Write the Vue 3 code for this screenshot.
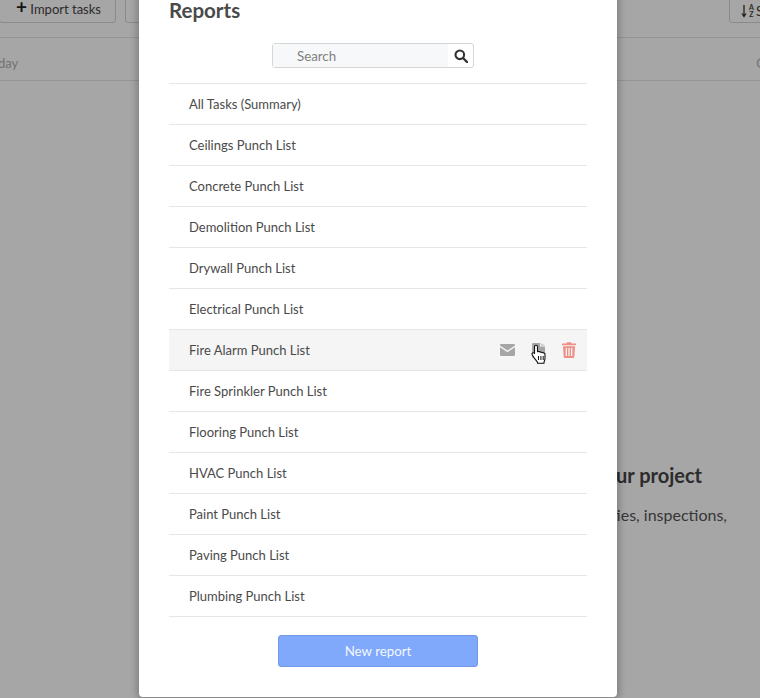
<script setup>
const reports = [
  'All Tasks (Summary)', 'Ceilings Punch List', 'Concrete Punch List', 'Demolition Punch List',
  'Drywall Punch List', 'Electrical Punch List', 'Fire Alarm Punch List', 'Fire Sprinkler Punch List',
  'Flooring Punch List', 'HVAC Punch List', 'Paint Punch List', 'Paving Punch List', 'Plumbing Punch List'
]
const activeRow = 'Fire Alarm Punch List'
</script>

<template>
  <div class="page">
    <header class="toolbar">
      <div class="toolbar-left">
        <button class="tool-btn import"><span class="plus">+</span> Import tasks</button>
        <button class="tool-btn stub"></button>
      </div>
      <button class="tool-btn sort">
        <svg class="sort-arrow" width="6" height="14" viewBox="0 0 6 14"><path d="M3 1v11M1 9.500l2 3 2-3" fill="none" stroke="#333" stroke-width="1.300"/></svg>
        <span class="sort-letters"><span>A</span><span>Z</span></span>
        <span>Sort</span>
      </button>
    </header>
    <div class="columns">
      <span>day</span>
      <span class="col-right">C</span>
    </div>
    <section class="empty">
      <h2>your project</h2>
      <p>activities, inspections,</p>
    </section>

    <div class="overlay">
      <div class="modal">
        <h1>Reports</h1>
        <div class="search">
          <span class="search-input">Search</span>
          <svg class="search-icon" width="14" height="14" viewBox="0 0 14 14">
            <circle cx="5.800" cy="5.800" r="4.300" fill="none" stroke="#333" stroke-width="2.100"/>
            <path d="M9 9l4 4" stroke="#333" stroke-width="2.400" stroke-linecap="round"/>
          </svg>
        </div>
        <ul class="list">
          <li v-for="r in reports" :key="r" class="row" :class="{ active: r === activeRow }">
            <span>{{ r }}</span>
            <span v-if="r === activeRow" class="actions">
              <svg width="15" height="12" viewBox="0 0 16 12" preserveAspectRatio="none">
                <path d="M1.200 0h13.600c.7 0 1.200.5 1.200 1.200v.4L8 6.500 0 1.600v-.4C0 .5.500 0 1.200 0z" fill="#a6a6a6"/>
                <path d="M0 3.300l8 4.900 8-4.900v7.500c0 .7-.5 1.200-1.200 1.200H1.200C.5 12 0 11.500 0 10.800z" fill="#a6a6a6"/>
              </svg>
              <span class="copy-wrap">
                <svg width="13" height="15" viewBox="0 0 12 15" preserveAspectRatio="none">
                  <path d="M1 0h6.500v3.500H12V14a1 1 0 0 1-1 1H1a1 1 0 0 1-1-1V1a1 1 0 0 1 1-1z" fill="#a6a6a6"/>
                  <path d="M8.500 0L12 2.800H8.500z" fill="#c4c4c4"/>
                </svg>
                <svg class="cursor" width="16" height="20" viewBox="0 0 16 20">
                  <path d="M5 1.300c.9 0 1.500.6 1.500 1.500v5l1.300-.3c.7-.1 1.200.2 1.400.7.600-.3 1.300-.2 1.700.4.600-.3 1.400-.1 1.700.5.600-.2 1.300.2 1.400 1v4.200c0 1.600-.5 2.600-1 3.800v1.100H6.500v-1c-1-1.100-2.200-2.800-3.400-4.400L1.300 11c-.6-.8-.4-1.600.2-2 .6-.4 1.300-.3 1.900.3l.1.100V2.800c0-.9.600-1.500 1.500-1.500z" fill="#fff" stroke="#111" stroke-width="1.100" stroke-linejoin="round"/>
                  <path d="M7.500 12v4M9.900 12v4M12.200 12v4" stroke="#111" stroke-width="1"/>
                </svg>
              </span>
              <svg width="14" height="16" viewBox="0 0 14 16">
                <path d="M5 .2h4l.7 1.300H14V3.200H0V1.500h4.300z" fill="#ee9085"/>
                <path d="M1 4.200h12l-.7 10.500c-.1.800-.5 1.300-1.200 1.300H2.900c-.7 0-1.100-.5-1.200-1.300zM3.700 6v8h1.300V6zm2.650 0v8h1.300V6zM9 6v8h1.300V6z" fill="#ee9085" fill-rule="evenodd"/>
              </svg>
            </span>
          </li>
        </ul>
        <button class="new-report">New report</button>
      </div>
    </div>
  </div>
</template>

<style>
html, body { margin: 0; background: #fff; }
</style>

<style scoped>
.page {
  position: relative;
  width: 760px;
  height: 698px;
  overflow: hidden;
  font-family: Lato, "Open Sans", sans-serif;
  color: #333;
  background: #fff;
}
.toolbar {
  display: flex;
  justify-content: space-between;
  height: 37px;
  border-bottom: 1px solid #e3e3e3;
}
.toolbar-left { display: flex; gap: 9px; }
.tool-btn {
  height: 30px;
  margin-top: -7px;
  padding: 0;
  border: 1px solid #d4d4d4;
  border-radius: 3px;
  background: #fff;
  font: 13px Lato, sans-serif;
  color: #444;
}
.import { width: 117px; margin-left: -1px; padding-left: 2px; }
.plus { font-size: 19px; font-weight: 700; line-height: 14px; color: #222; }
.stub { width: 60px; }
.sort {
  display: flex;
  align-items: center;
  gap: 2px;
  width: 70px;
  margin-right: -39px;
  padding: 6px 0 0 11px;
  white-space: nowrap;
}
.sort-letters {
  display: flex;
  flex-direction: column;
  font-size: 7px;
  font-weight: 700;
  line-height: 7px;
}
.columns {
  display: flex;
  justify-content: space-between;
  height: 42px;
  margin-left: -2px;
  margin-right: -5px;
  border-bottom: 1px solid #e3e3e3;
  line-height: 50px;
  font-size: 13px;
  color: #b0b0b0;
}
.empty {
  padding-top: 381px;
  padding-right: 33px;
  text-align: right;
}
.empty h2 {
  margin: 0;
  padding-right: 25px;
  font-size: 20px;
  line-height: 26px;
  font-weight: 700;
  color: #444;
}
.empty p {
  margin: 15px 0 0;
  font-size: 16px;
  line-height: 24px;
  color: #555;
}
.overlay {
  position: absolute;
  inset: 0;
  display: flex;
  justify-content: center;
  align-items: flex-end;
  padding-right: 4px;
  padding-bottom: 1px;
  background: rgba(0, 0, 0, 0.35);
}
.modal {
  box-sizing: border-box;
  width: 478px;
  padding: 0 30px 30px;
  border-radius: 0 0 4px 4px;
  background: #fff;
  box-shadow: 0 0 6px 3px rgba(0, 0, 0, 0.2);
  display: flex;
  flex-direction: column;
}
h1 {
  margin: 0 0 20px;
  font-size: 20.500px;
  line-height: 26px;
  font-weight: 700;
  color: #4a4a4a;
}
.search {
  box-sizing: border-box;
  display: flex;
  align-items: center;
  justify-content: space-between;
  align-self: center;
  width: 202px;
  height: 25px;
  margin-right: 10px;
  border: 1px solid #d6d6d6;
  border-radius: 3px;
  background: #fff;
}
.search-input {
  flex: 1;
  align-self: stretch;
  padding-left: 24px;
  margin-right: 6px;
  font-size: 13.300px;
  line-height: 24px;
  color: #808080;
  background: #f7f8fa;
}
.search-icon { margin-right: 5px; }
.list {
  list-style: none;
  margin: 15px 0 0;
  padding: 0;
  border-top: 1px solid #e6e6e6;
}
.row {
  box-sizing: border-box;
  display: flex;
  align-items: center;
  justify-content: space-between;
  height: 41px;
  padding: 0 11px 1px 20px;
  border-bottom: 1px solid #e6e6e6;
  font-size: 13px;
  color: #4a4a4a;
}
.row.active { background: #f5f5f5; }
.actions { display: flex; align-items: center; gap: 17px; margin-top: 1px; }
.copy-wrap { position: relative; display: flex; }
.cursor { position: absolute; left: -1px; top: 1px; }
.new-report {
  align-self: center;
  width: 200px;
  height: 32px;
  margin-top: 18px;
  padding: 0 0 1px;
  border: 1px solid #7099ea;
  border-radius: 3px;
  background: #80a9fc;
  color: #f3f7ff;
  font: 13.300px Lato, sans-serif;
}
</style>
